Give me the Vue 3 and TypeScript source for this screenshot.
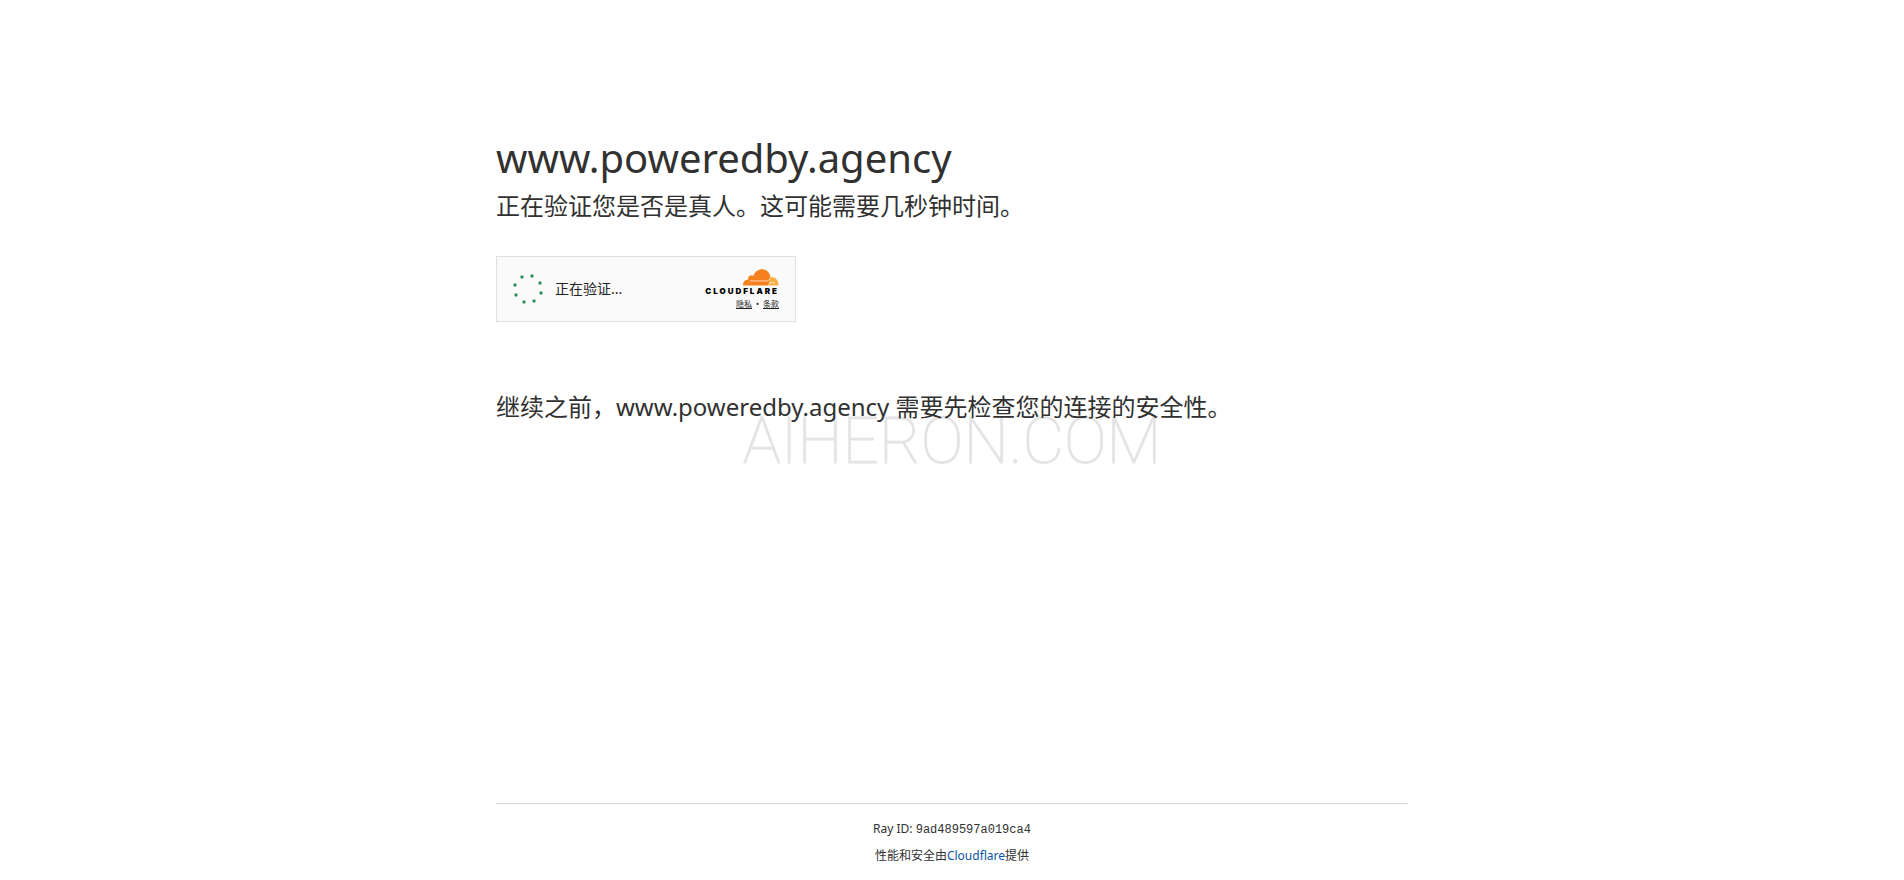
<script setup lang="ts">
const host: string = 'www.poweredby.agency'
const rayId: string = '9ad489597a019ca4'
const dots = [
  [9, 5], [19, 4], [27, 11], [28, 21], [21, 29], [11, 30], [3, 23], [2, 13],
].map(([x, y]) => ({ x, y }))
</script>

<template>
  <div class="page">
    <div class="watermark">AIHERON.COM</div>
    <main class="content">
      <h1>{{ host }}</h1>
      <p class="lead">正在验证您是否是真人。这可能需要几秒钟时间。</p>
      <section class="widget">
        <svg class="spinner" viewBox="0 0 32 34" width="32" height="34" aria-hidden="true">
          <circle v-for="(d, i) in dots" :key="i" :cx="d.x" :cy="d.y" r="1.7" />
        </svg>
        <span class="status">正在验证...</span>
        <div class="brand">
          <svg class="cloud" viewBox="0 0 36 17" width="36" height="17" aria-hidden="true">
            <path fill="#f6821f" d="M0 16.500C0 13 2 10.700 5.200 10.500C4.700 7.500 7.700 5.300 10.300 6.900C12 2.500 15.300.3 18.800.3C23.300.3 26.700 3.500 27.500 7.900L25.800 16.500Z" />
            <path fill="#fbad41" d="M28.300 8C32.500 8 35.800 11.500 35.500 16.500H25.500C26.300 13.500 26 12 27.300 8.100Z" />
            <path fill="none" stroke="#fff" stroke-width=".8" stroke-opacity=".8" d="M7 11.900H24.500Q26.500 11.600 27.500 8.300M25.700 16.500L26.600 13.600H32" />
          </svg>
          <span class="wordmark">CLOUDFLARE</span>
          <div class="terms"><a href="#privacy">隐私</a><span>•</span><a href="#terms">条款</a></div>
        </div>
      </section>
      <p class="lead">继续之前，{{ host }} 需要先检查您的连接的安全性。</p>
    </main>
    <footer class="footer">
      <div>Ray ID: <code>{{ rayId }}</code></div>
      <div>性能和安全由<a href="https://www.cloudflare.com">Cloudflare</a>提供</div>
    </footer>
  </div>
</template>

<style>
body { margin: 0; background: #fff; }
</style>
<style scoped>
.page {
  position: relative;
  box-sizing: border-box;
  min-height: 100vh;
  display: flex;
  flex-direction: column;
  justify-content: space-between;
  padding: 128px 24px 15px;
  color: #313131;
  font-family: "Noto Sans", "Noto Sans CJK SC", sans-serif;
}
.content, .footer { position: relative; width: 100%; max-width: 912px; margin: 0 auto; }
h1 { margin: 0; font-size: 40px; line-height: 60px; font-weight: 400; }
.lead { margin: 0; font-size: 24px; line-height: 36px; font-weight: 400; }
.widget {
  box-sizing: border-box;
  width: 300px;
  max-width: 100%;
  min-height: 66px;
  margin: 32px 0 67px;
  padding: 0 16px;
  display: flex;
  align-items: center;
  background: #fafafa;
  border: 1px solid #e0e0e0;
}
.spinner { fill: #33905a; }
.status { margin-left: 10px; font-size: 14px; line-height: 20px; color: #232323; }
.brand { margin-left: auto; padding-top: 2px; display: flex; flex-direction: column; align-items: flex-end; }
.cloud { display: block; }
.wordmark { font: 900 8px/11px Inter, "Liberation Sans", sans-serif; letter-spacing: 2px; color: #000; }
.terms { display: flex; gap: 4px; font-size: 8px; line-height: 14px; color: #232323; }
.terms a { color: inherit; }
.footer {
  box-sizing: border-box;
  padding-top: 16px;
  border-top: 1px solid #d9d9d9;
  display: grid;
  gap: 8px;
  text-align: center;
  font-size: 12px;
  line-height: 18px;
}
.footer code { font-family: "Liberation Mono", monospace; font-size: 12px; }
.footer a { color: #0a56a8; text-decoration: none; }
.watermark {
  position: absolute;
  inset: 0;
  padding-top: 4px;
  display: flex;
  align-items: center;
  justify-content: center;
  pointer-events: none;
  font: 100 64px/72px Roboto, sans-serif;
  color: #e4e4e4;
  -webkit-text-stroke: 1px #e4e4e4;
}
</style>
